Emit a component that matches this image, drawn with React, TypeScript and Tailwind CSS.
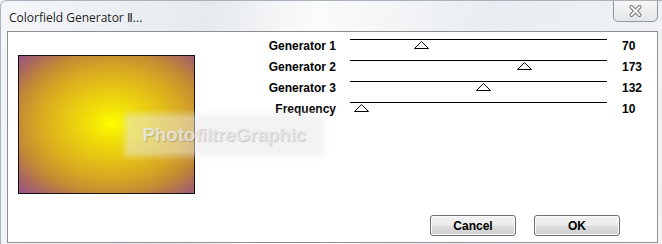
const sliders = [
  { label: "Generator 1", value: 70 },
  { label: "Generator 2", value: 173 },
  { label: "Generator 3", value: 132 },
  { label: "Frequency", value: 10 },
];

function Thumb({ value }: { value: number }) {
  return (
    <svg
      className="absolute top-[2px]"
      style={{ left: value - 6 }}
      width="15"
      height="8"
      viewBox="0 0 15 8"
    >
      <polygon points="0.5,7.5 7.5,0.5 14.5,7.5" fill="#fff" stroke="#000" strokeWidth="1" />
    </svg>
  );
}

function CloseGlyph() {
  return (
    <svg width="13" height="12" viewBox="0 0 13 12">
      <path d="M2.5 2 L10.5 10 M10.5 2 L2.5 10" stroke="#7a7a7a" strokeWidth="4" strokeLinecap="round" />
      <path d="M2.5 2 L10.5 10 M10.5 2 L2.5 10" stroke="#f4f4f4" strokeWidth="2" strokeLinecap="round" />
    </svg>
  );
}

function Button({ children }: { children: string }) {
  return (
    <button className="flex h-[21px] w-[86px] items-center justify-center rounded-[3px] border border-[#707070] bg-[linear-gradient(#f2f2f2_0%,#ebebeb_50%,#dddddd_51%,#cfcfcf_100%)] text-[12px] font-bold text-black shadow-[inset_0_0_0_1px_#fcfcfc]">
      {children}
    </button>
  );
}

export default function App() {
  return (
    <div className="flex h-[244px] w-[662px] flex-col overflow-hidden rounded-tl-[6px] border-l border-t border-[#a9b3be] bg-[linear-gradient(100deg,#f4f6f8_0%,#e6eaee_30%,#fbfbfc_45%,#e9edf1_70%,#f1f3f5_100%)] font-['Liberation_Sans',Arial,sans-serif]">
      <div className="flex h-[30px] shrink-0 items-start justify-between pl-[8px] pr-[4px]">
        <span className="mt-[9px] font-['Open_Sans','Noto_Sans',sans-serif] text-[12px] leading-[15px] text-[#1e1e1e]">
          Colorfield Generator Ⅱ...
        </span>
        <div className="-mt-px flex h-[22px] w-[45px] items-center justify-center rounded-b-[5px] border border-[#8f979f] bg-[linear-gradient(#f7f7f7,#e4e7ea)]">
          <CloseGlyph />
        </div>
      </div>

      <div className="relative mb-[1px] ml-[6px] mr-[4px] flex h-[212px] flex-col border border-[#8e8f8f] bg-white">
        <div className="flex">
          <div className="ml-[10px] mt-[23px] h-[139px] w-[177px] shrink-0 border border-[#111] bg-[radial-gradient(ellipse_farthest-corner_at_53%_49%,#ffff00_0%,#f2e206_16%,#e6c514_36%,#d7a722_56%,#c48a34_72%,#aa6a5c_86%,#96508c_100%)]" />

          <div className="mt-[3px] flex flex-col">
            {sliders.map((s) => (
              <div key={s.label} className="flex h-[21px]">
                <div className="flex w-[141px] items-center justify-end pt-[1px] text-[12px] font-bold text-black">
                  {s.label}
                </div>
                <div className="ml-[14px] w-[257px] pt-[4px]">
                  <div className="relative h-px bg-black">
                    <Thumb value={s.value} />
                  </div>
                </div>
                <div className="ml-[15px] flex items-center pt-[1px] text-[12px] font-bold text-black">
                  {s.value}
                </div>
              </div>
            ))}
          </div>
        </div>

        <div className="mt-[21px] flex justify-end gap-[18px] pr-[37px]">
          <Button>Cancel</Button>
          <Button>OK</Button>
        </div>

        <div className="absolute left-[120px] top-[85px] flex h-[36px] w-[192px] items-center justify-center bg-[#e8e8e8]/50 shadow-[0_0_6px_4px_rgba(232,232,232,0.45)]">
          <span className="text-[19px] font-bold tracking-[-0.2px] text-[#ececec]/80 [text-shadow:1px_1px_1px_rgba(0,0,0,0.18)]">
            PhotofiltreGraphic
          </span>
        </div>
      </div>
    </div>
  );
}
